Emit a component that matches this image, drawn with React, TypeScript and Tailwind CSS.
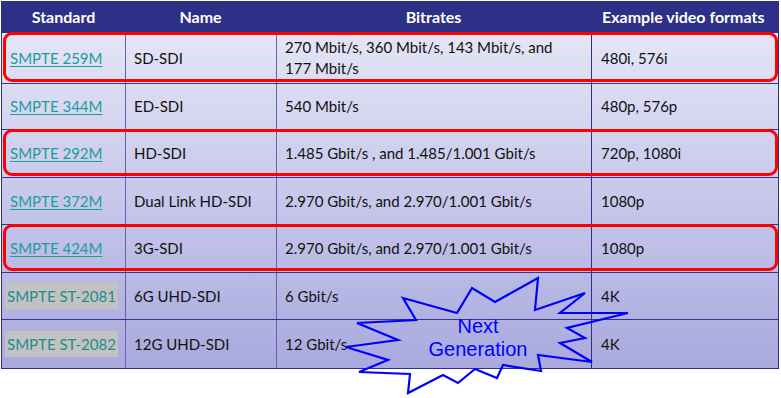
const rows = [
  { std: "SMPTE 259M", name: "SD-SDI", rate: ["270 Mbit/s, 360 Mbit/s, 143 Mbit/s, and", "177 Mbit/s"], fmt: "480i, 576i", box: true, h: "h-[50px]" },
  { std: "SMPTE 344M", name: "ED-SDI", rate: ["540 Mbit/s"], fmt: "480p, 576p", h: "h-[46px]" },
  { std: "SMPTE 292M", name: "HD-SDI", rate: ["1.485 Gbit/s , and 1.485/1.001 Gbit/s"], fmt: "720p, 1080i", box: true, h: "h-[48px]" },
  { std: "SMPTE 372M", name: "Dual Link HD-SDI", rate: ["2.970 Gbit/s, and 2.970/1.001 Gbit/s"], fmt: "1080p", h: "h-[47px]" },
  { std: "SMPTE 424M", name: "3G-SDI", rate: ["2.970 Gbit/s, and 2.970/1.001 Gbit/s"], fmt: "1080p", box: true, h: "h-[48px]" },
  { std: "SMPTE ST-2081", name: "6G UHD-SDI", rate: ["6 Gbit/s"], fmt: "4K", plain: true, h: "h-[47px]" },
  { std: "SMPTE ST-2082", name: "12G UHD-SDI", rate: ["12 Gbit/s"], fmt: "4K", plain: true, h: "h-[49px]" },
];

const cols = "grid grid-cols-[123px_151px_315px_1fr]";

export default function App() {
  return (
    <div className="relative h-[398px] w-[781px] overflow-hidden bg-white font-['Lato',sans-serif] text-[15px] text-[#111]">
      <div className="ml-[1px] mt-[1px] w-[778px] border border-t-0 border-[#2e3087]">
        <div className={`${cols} h-[32px] items-center bg-[#2e3087] text-[16px] font-bold text-white`}>
          <div className="text-center">Standard</div>
          <div className="text-center">Name</div>
          <div className="text-center">Bitrates</div>
          <div className="whitespace-nowrap pl-[11px]">Example video formats</div>
        </div>
        <div className="bg-gradient-to-b from-[#e5e5f6] to-[#a9a9de]">
          {rows.map((r, i) => (
            <div
              key={r.std}
              className={`${cols} relative ${r.h} items-center ${i > 0 ? "border-t-[1.5px] border-[#34348c]" : ""}`}
            >
              <div className="flex h-full items-center whitespace-nowrap pl-[8px]">
                {r.plain ? (
                  <span className="-ml-[5px] bg-[#c2c2c2] px-[2px] leading-[26px] text-[#1a8f8f]">{r.std}</span>
                ) : (
                  <span className="text-[#1b9d9d] underline underline-offset-2">{r.std}</span>
                )}
              </div>
              <div className="flex h-full items-center border-l border-[#6262b0] pl-[8px]">{r.name}</div>
              <div className="flex h-full flex-col justify-center border-l border-[#6262b0] pl-[8px] leading-[21px]">
                {r.rate.map((t) => (
                  <span key={t}>{t}</span>
                ))}
              </div>
              <div className="flex h-full items-center border-l border-[#2e3087] pl-[9px]">{r.fmt}</div>
              {r.box && (
                <div className="pointer-events-none absolute top-[-1px] bottom-[1px] left-[1px] right-[0px] rounded-[9px] border-[3px] border-[#ff0000]" />
              )}
            </div>
          ))}
        </div>
      </div>

      <svg className="absolute left-0 top-0" width="781" height="398" viewBox="0 0 781 398">
        <polygon
          points="403,298 457,313 472,288 495,302 538,278 535,310 585,293 560,313 628,313 567,328 585,338 560,343 592,362 538,355 541,371 503,365 497,378 475,369 458,383 443,375 408,393 410,374 359,372 388,360 346,347 398,340 357,323 416,320"
          fill="none"
          stroke="#0000ff"
          strokeWidth="2.2"
          strokeLinejoin="miter"
        />
      </svg>
      <div className="absolute left-[406px] top-[315px] w-[144px] text-center font-['Liberation_Sans',sans-serif] text-[20px] leading-[23px] text-[#0000ff]">
        Next
        <br />
        Generation
      </div>
    </div>
  );
}
